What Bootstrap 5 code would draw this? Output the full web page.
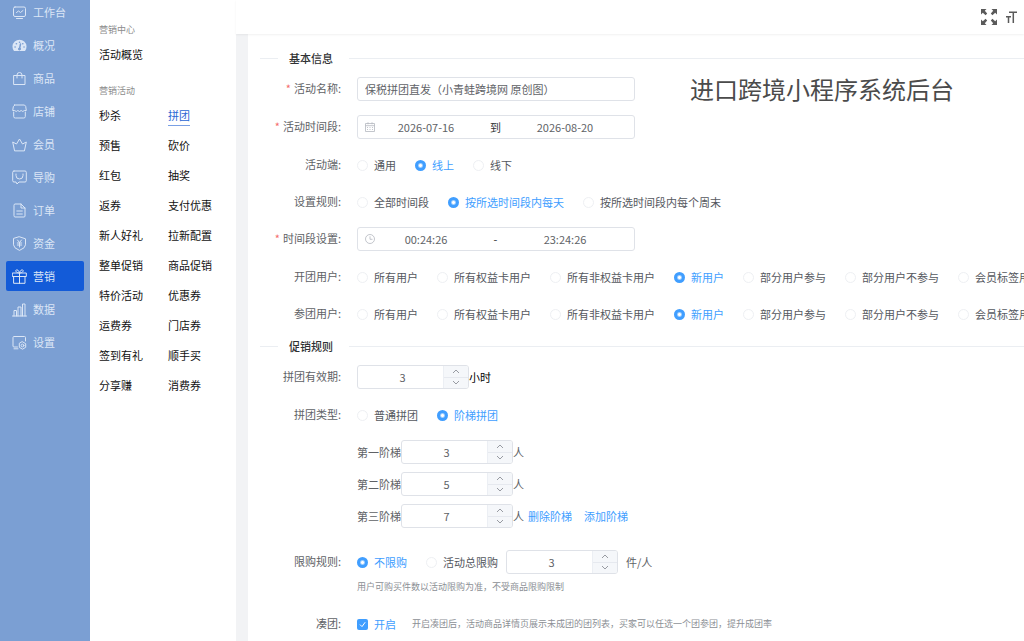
<!DOCTYPE html>
<html lang="zh-CN">
<head>
<meta charset="utf-8">
<meta name="viewport" content="width=device-width, initial-scale=1">
<title>拼团活动设置</title>
<link href="https://cdn.jsdelivr.net/npm/bootstrap@5.3.0/dist/css/bootstrap.min.css" rel="stylesheet">
<style>
  body { font-family: "Noto Sans CJK SC", "Liberation Sans", sans-serif; font-size: 11px; line-height: 16px; color: #606266; background: #fff; overflow-x: hidden; }
  a { text-decoration: none; }
  svg { flex: none; display: block; }

  .side { width: 90px; background: #7b9fd3; overflow: hidden; }
  .side-menu { gap: 3px; margin-top: -3px; padding: 0 6px; }
  .side-link { height: 30px; padding-left: 6px; gap: 6px; color: #dbe6f6; border-radius: 2px; }
  .side-link svg { width: 15px; height: 15px; fill: none; stroke: currentColor; stroke-width: 1; stroke-linecap: round; stroke-linejoin: round; }
  .side-link.current { background: #135bd8; }

  .submenu { width: 146px; padding: 22px 9px; }
  .sub-title { font-size: 9px; font-weight: 400; line-height: 16px; color: #8c8c8c; margin: 0 0 7px; }
  .sub-link { color: #111; line-height: 18px; }
  .sub-link.current { color: #2a66d4; border-bottom: 1px solid #7aa0e4; margin-bottom: -2px; padding-bottom: 1px; }
  .sub-grid { display: grid; grid-template-columns: 69px 1fr; row-gap: 12px; justify-items: start; }
  .sub-head { margin-bottom: 20px; }

  .work-area { min-width: 0; }
  .topbar { height: 34px; padding-right: 7px; gap: 9px; color: #5a5a5a; box-shadow: 0 1px 2px rgba(0,0,0,.06); z-index: 1; }
  .icon-button { border: 0; padding: 0; background: none; color: inherit; }
  .work { background: #f2f3f5; padding-left: 12px; }
  .sheet { background: #fff; min-width: 0; padding: 17px 0 4px 12px; overflow: hidden; }

  .section-line { gap: 11px; height: 14px; margin-bottom: 12px; font-size: 11px; line-height: 14px; color: #303133; font-weight: 500; }
  .section-line::before { content: ""; width: 18px; height: 1px; background: #ebeef2; }
  .section-line::after { content: ""; flex: 1; height: 1px; margin-left: 5px; background: #ebeef2; }

  .field { display: flex; margin-bottom: 14px; white-space: nowrap; }
  .field.choices { margin-bottom: 13px; }
  .field-label { width: 81px; margin-right: 16px; line-height: 23px; text-align: right; flex: none; }
  .need::before { content: "*"; color: #f56c6c; margin-right: 3px; }
  .line { display: flex; align-items: center; min-height: 24px; }
  .caption { font-size: 24px; line-height: 24px; color: #4b4b4b; font-weight: 400; margin: 0 0 0 55px; }

  .box { width: 278px; height: 24px; border: 1px solid #dfe2e8; border-radius: 3px; background: #fff; color: #606266; }
  input.box { padding: 0 7px; }
  .range { display: flex; align-items: center; padding: 0 18px 0 7px; }
  .range input { flex: 1; min-width: 0; }
  .range span { width: 37px; text-align: center; color: #303133; }
  .bare { border: 0; padding: 0; background: none; color: inherit; text-align: center; height: 20px; }
  input { outline: 0; }

  .choice { display: inline-flex; align-items: center; gap: 6px; margin-right: 19px; color: #55585e; }
  .choice input { appearance: none; width: 11px; height: 11px; margin: 0; flex: none; border: 1px solid #eef0f3; border-radius: 50%; background: #fff; }
  .choice input:checked { border: 0; background: radial-gradient(circle, #fff 0 1px, #409eff 3px); }
  .choice:has(input:checked) { color: #409eff; }
  .choice input[type=checkbox] { border-radius: 2px; }
  .choice input[type=checkbox]:checked { background: #409eff url("data:image/svg+xml,%3Csvg xmlns='http://www.w3.org/2000/svg' viewBox='0 0 11 11'%3E%3Cpath d='M3 5.6l2 2 3.2-4.4' fill='none' stroke='white'/%3E%3C/svg%3E"); }

  .stepper { display: flex; width: 112px; height: 24px; border: 1px solid #dfe2e8; border-radius: 3px; overflow: hidden; color: #606266; }
  .stepper input { flex: 1; min-width: 0; height: 22px; padding-left: 4px; }
  .steps { width: 25px; display: flex; flex-direction: column; background: #f5f7fa; border-left: 1px solid #eceff4; }
  .steps button { flex: 1; border: 0; padding: 0; background: none; display: flex; align-items: center; justify-content: center; color: #8d9097; }
  .steps button + button { border-top: 1px solid #e6e9ef; }
  .tiers { display: grid; row-gap: 8px; margin-top: 13px; }
  .text-link { color: #409eff; }
  .hint { font-size: 9px; line-height: 16px; color: #8c8f95; }
  .limit-row { margin: 22px 0 17px; }
  .limit-row .hint { margin-top: 5px; }
</style>
</head>
<body>
<svg class="d-none" xmlns="http://www.w3.org/2000/svg">
  <symbol id="up" viewBox="0 0 8 5"><path d="M1 4l3-3 3 3" fill="none" stroke="currentColor" stroke-width=".9"/></symbol>
  <symbol id="down" viewBox="0 0 8 5"><path d="M1 1l3 3 3-3" fill="none" stroke="currentColor" stroke-width=".9"/></symbol>
</svg>
<div class="d-flex min-vh-100">
  <nav class="side flex-shrink-0">
    <div class="side-menu d-flex flex-column">
      <a class="side-link d-flex align-items-center" href="#"><svg viewBox="0 0 15 15"><rect x="1.5" y="2" width="12" height="9.5" rx="1.5"/><path d="M4.5 7.5l2-1.5 2 1.5 2.500-2M4.500 13.500h6"/></svg>工作台</a>
      <a class="side-link d-flex align-items-center" href="#"><svg viewBox="0 0 15 15"><path d="M2 13A7 7 0 1 1 13 13Z" fill="currentColor" stroke="none"/><path d="M7.500 11L8.500 6M3 9h.2M4.300 5.800h.2M7.500 4.300h.1M10.700 5.800h.2M12 9h.1" stroke="#7b9fd3" stroke-width="1.500"/><circle cx="7.400" cy="11" r="1" fill="#7b9fd3" stroke="#7b9fd3"/></svg>概况</a>
      <a class="side-link d-flex align-items-center" href="#"><svg viewBox="0 0 15 15"><path d="M2 4.500h11v9H2zM5 7V4a2.500 2.500 0 0 1 5 0v3"/></svg>商品</a>
      <a class="side-link d-flex align-items-center" href="#"><svg viewBox="0 0 15 15"><path d="M2.500 1h10q1.500 0 1.800 5.500h-2l-1.500 1-1.600-1-1.700 1-1.700-1-1.600 1-1.500-1h-2Q1 1 2.500 1zM1.700 8v4.500q0 1.500 1.500 1.500h8.600q1.500 0 1.500-1.500V8"/></svg>店铺</a>
      <a class="side-link d-flex align-items-center" href="#"><svg viewBox="0 0 15 15"><path d="M2.500 13.500L.7 5l3.800 2 3-5 3 5 3.800-2-1.800 8.500z"/></svg>会员</a>
      <a class="side-link d-flex align-items-center" href="#"><svg viewBox="0 0 15 15"><path d="M2 1h11q1.300 0 1.300 1.300v8.400q0 1.300-1.300 1.300H7l-2 2-1-2H2Q.7 12 .7 10.700V2.300Q.7 1 2 1zM4 4v1.500a3.500 3.500 0 0 0 7 0V4"/></svg>导购</a>
      <a class="side-link d-flex align-items-center" href="#"><svg viewBox="0 0 15 15"><path d="M2 2q0-1 1-1h6l4 4v8q0 1-1 1H3q-1 0-1-1zM9 1v4h4M4.800 8h5.500M4.800 11h5.500"/></svg>订单</a>
      <a class="side-link d-flex align-items-center" href="#"><svg viewBox="0 0 15 15"><path d="M7.500.8l6 2v6q0 3.200-6 5.600-6-2.400-6-5.600v-6zM5.500 4l2 2.500 2-2.500M7.500 6.500V11M5.300 7h4.400M5.300 9h4.400"/></svg>资金</a>
      <a class="side-link current d-flex align-items-center" href="#" aria-current="page"><svg viewBox="0 0 15 15"><path d="M.7 4h13.600v3.500H.7zM2 7.500h11v6.800H2zM7.500 4v10.300M7.500 4C3.500 4 3 1 4.800.8 6.500.6 7.500 4 7.500 4S8.500.6 10.200.8C12 1 11.500 4 7.500 4"/></svg>营销</a>
      <a class="side-link d-flex align-items-center" href="#"><svg viewBox="0 0 15 15"><path d="M.5 14h14M2 14V8.500h2.500V14M6 14V5h3v9M10.500 14V2H13v12"/></svg>数据</a>
      <a class="side-link d-flex align-items-center" href="#"><svg viewBox="0 0 15 15"><path d="M5.500 12H2q-1 0-1-1V2.500q0-1 1-1h10.500q1 0 1 1V6M2 13.800h4M10.500 6.800l3.200 1.900v3.600l-3.200 1.900-3.200-1.900V8.700z"/><circle cx="10.500" cy="10.500" r="1.400"/></svg>设置</a>
    </div>
  </nav>

  <aside class="submenu flex-shrink-0">
    <h2 class="sub-title">营销中心</h2>
    <div class="sub-head"><a class="sub-link" href="#">活动概览</a></div>
    <h2 class="sub-title">营销活动</h2>
    <div class="sub-grid">
      <a class="sub-link" href="#">秒杀</a><a class="sub-link current" href="#">拼团</a>
      <a class="sub-link" href="#">预售</a><a class="sub-link" href="#">砍价</a>
      <a class="sub-link" href="#">红包</a><a class="sub-link" href="#">抽奖</a>
      <a class="sub-link" href="#">返券</a><a class="sub-link" href="#">支付优惠</a>
      <a class="sub-link" href="#">新人好礼</a><a class="sub-link" href="#">拉新配置</a>
      <a class="sub-link" href="#">整单促销</a><a class="sub-link" href="#">商品促销</a>
      <a class="sub-link" href="#">特价活动</a><a class="sub-link" href="#">优惠券</a>
      <a class="sub-link" href="#">运费券</a><a class="sub-link" href="#">门店券</a>
      <a class="sub-link" href="#">签到有礼</a><a class="sub-link" href="#">顺手买</a>
      <a class="sub-link" href="#">分享赚</a><a class="sub-link" href="#">消费券</a>
    </div>
  </aside>

  <div class="work-area d-flex flex-column flex-grow-1">
    <header class="topbar d-flex align-items-center justify-content-end">
      <button class="icon-button" type="button" aria-label="全屏"><svg width="16" height="16" viewBox="0 0 16 16" fill="currentColor"><path id="corner" d="M0 0h5.500L3.800 1.800 6.200 4.600 4.600 6.200 1.800 3.800 0 5.500z"/><use href="#corner" transform="rotate(90 8 8)"/><use href="#corner" transform="rotate(180 8 8)"/><use href="#corner" transform="rotate(270 8 8)"/></svg></button>
      <button class="icon-button" type="button" aria-label="字号"><svg width="11" height="12" viewBox="0 0 11 12" fill="none" stroke="currentColor" stroke-width="1.500"><path d="M3 1.300h8M7.300 1.300V12M0 5.700h5M2.500 5.700V12"/></svg></button>
    </header>

    <main class="work d-flex flex-grow-1">
      <form class="sheet flex-grow-1">
        <h3 class="section-line d-flex align-items-center">基本信息</h3>
        <div class="field">
          <label class="field-label need" for="name">活动名称:</label>
          <input class="box" id="name" type="text" value="保税拼团直发（小青蛙跨境网 原创图）">
          <h1 class="caption">进口跨境小程序系统后台</h1>
        </div>
        <div class="field">
          <label class="field-label need" for="d1">活动时间段:</label>
          <div class="box range">
            <svg width="10" height="10" viewBox="0 0 10 10" fill="none" stroke="#b4b8bf" stroke-width=".8"><path d="M.5 1.500h9v8h-9zM.5 3.700h9M3 .3v2M7 .3v2"/><path d="M2 5.500h6M2 7.500h6" stroke-dasharray="1 1.500"/></svg>
            <input class="bare" id="d1" type="text" value="2026-07-16"><span>到</span><input class="bare" type="text" aria-label="结束日期" value="2026-08-20">
          </div>
        </div>
        <div class="field choices">
          <span class="field-label">活动端:</span>
          <div class="line">
            <label class="choice"><input type="radio" name="end">通用</label>
            <label class="choice"><input type="radio" name="end" checked>线上</label>
            <label class="choice"><input type="radio" name="end">线下</label>
          </div>
        </div>
        <div class="field choices">
          <span class="field-label">设置规则:</span>
          <div class="line">
            <label class="choice"><input type="radio" name="rule">全部时间段</label>
            <label class="choice"><input type="radio" name="rule" checked>按所选时间段内每天</label>
            <label class="choice"><input type="radio" name="rule">按所选时间段内每个周末</label>
          </div>
        </div>
        <div class="field">
          <label class="field-label need" for="t1">时间段设置:</label>
          <div class="box range">
            <svg width="10" height="10" viewBox="0 0 10 10" fill="none" stroke="#b4b8bf" stroke-width=".8"><circle cx="5" cy="5" r="4.500"/><path d="M5 2.300V5.300h2.500"/></svg>
            <input class="bare" id="t1" type="text" value="00:24:26"><span>-</span><input class="bare" type="text" aria-label="结束时间" value="23:24:26">
          </div>
        </div>
        <div class="field choices">
          <span class="field-label">开团用户:</span>
          <div class="line">
            <label class="choice"><input type="radio" name="open">所有用户</label>
            <label class="choice"><input type="radio" name="open">所有权益卡用户</label>
            <label class="choice"><input type="radio" name="open">所有非权益卡用户</label>
            <label class="choice"><input type="radio" name="open" checked>新用户</label>
            <label class="choice"><input type="radio" name="open">部分用户参与</label>
            <label class="choice"><input type="radio" name="open">部分用户不参与</label>
            <label class="choice"><input type="radio" name="open">会员标签用户</label>
          </div>
        </div>
        <div class="field choices">
          <span class="field-label">参团用户:</span>
          <div class="line">
            <label class="choice"><input type="radio" name="join">所有用户</label>
            <label class="choice"><input type="radio" name="join">所有权益卡用户</label>
            <label class="choice"><input type="radio" name="join">所有非权益卡用户</label>
            <label class="choice"><input type="radio" name="join" checked>新用户</label>
            <label class="choice"><input type="radio" name="join">部分用户参与</label>
            <label class="choice"><input type="radio" name="join">部分用户不参与</label>
            <label class="choice"><input type="radio" name="join">会员标签用户</label>
          </div>
        </div>

        <h3 class="section-line d-flex align-items-center">促销规则</h3>
        <div class="field">
          <label class="field-label" for="hours">拼团有效期:</label>
          <div class="line text-black">
            <div class="stepper"><input class="bare" id="hours" type="text" value="3"><div class="steps"><button type="button" aria-label="增加"><svg width="8" height="5"><use href="#up"/></svg></button><button type="button" aria-label="减少"><svg width="8" height="5"><use href="#down"/></svg></button></div></div>小时
          </div>
        </div>
        <div class="field">
          <span class="field-label">拼团类型:</span>
          <div>
            <div class="line">
              <label class="choice"><input type="radio" name="kind">普通拼团</label>
              <label class="choice"><input type="radio" name="kind" checked>阶梯拼团</label>
            </div>
            <div class="tiers">
              <div class="line"><label for="s1">第一阶梯</label><div class="stepper"><input class="bare" id="s1" type="text" value="3"><div class="steps"><button type="button" aria-label="增加"><svg width="8" height="5"><use href="#up"/></svg></button><button type="button" aria-label="减少"><svg width="8" height="5"><use href="#down"/></svg></button></div></div>人</div>
              <div class="line"><label for="s2">第二阶梯</label><div class="stepper"><input class="bare" id="s2" type="text" value="5"><div class="steps"><button type="button" aria-label="增加"><svg width="8" height="5"><use href="#up"/></svg></button><button type="button" aria-label="减少"><svg width="8" height="5"><use href="#down"/></svg></button></div></div>人</div>
              <div class="line"><label for="s3">第三阶梯</label><div class="stepper"><input class="bare" id="s3" type="text" value="7"><div class="steps"><button type="button" aria-label="增加"><svg width="8" height="5"><use href="#up"/></svg></button><button type="button" aria-label="减少"><svg width="8" height="5"><use href="#down"/></svg></button></div></div>人<a class="text-link ms-1" href="#">删除阶梯</a><a class="text-link ms-2 ps-1" href="#">添加阶梯</a></div>
            </div>
          </div>
        </div>
        <div class="field limit-row">
          <span class="field-label">限购规则:</span>
          <div>
            <div class="line">
              <label class="choice"><input type="radio" name="limit" checked>不限购</label>
              <label class="choice me-2"><input type="radio" name="limit">活动总限购</label>
              <div class="stepper"><input class="bare" type="text" aria-label="限购件数" value="3"><div class="steps"><button type="button" aria-label="增加"><svg width="8" height="5"><use href="#up"/></svg></button><button type="button" aria-label="减少"><svg width="8" height="5"><use href="#down"/></svg></button></div></div><span class="ms-2">件/人</span>
            </div>
            <div class="hint">用户可购买件数以活动限购为准，不受商品限购限制</div>
          </div>
        </div>
        <div class="field mb-0">
          <span class="field-label">凑团:</span>
          <div class="line">
            <label class="choice me-3"><input type="checkbox" checked>开启</label>
            <span class="hint">开启凑团后，活动商品详情页展示未成团的团列表，买家可以任选一个团参团，提升成团率</span>
          </div>
        </div>
      </form>
    </main>
  </div>
</div>
<script src="https://cdn.jsdelivr.net/npm/bootstrap@5.3.0/dist/js/bootstrap.bundle.min.js"></script>
</body>
</html>
